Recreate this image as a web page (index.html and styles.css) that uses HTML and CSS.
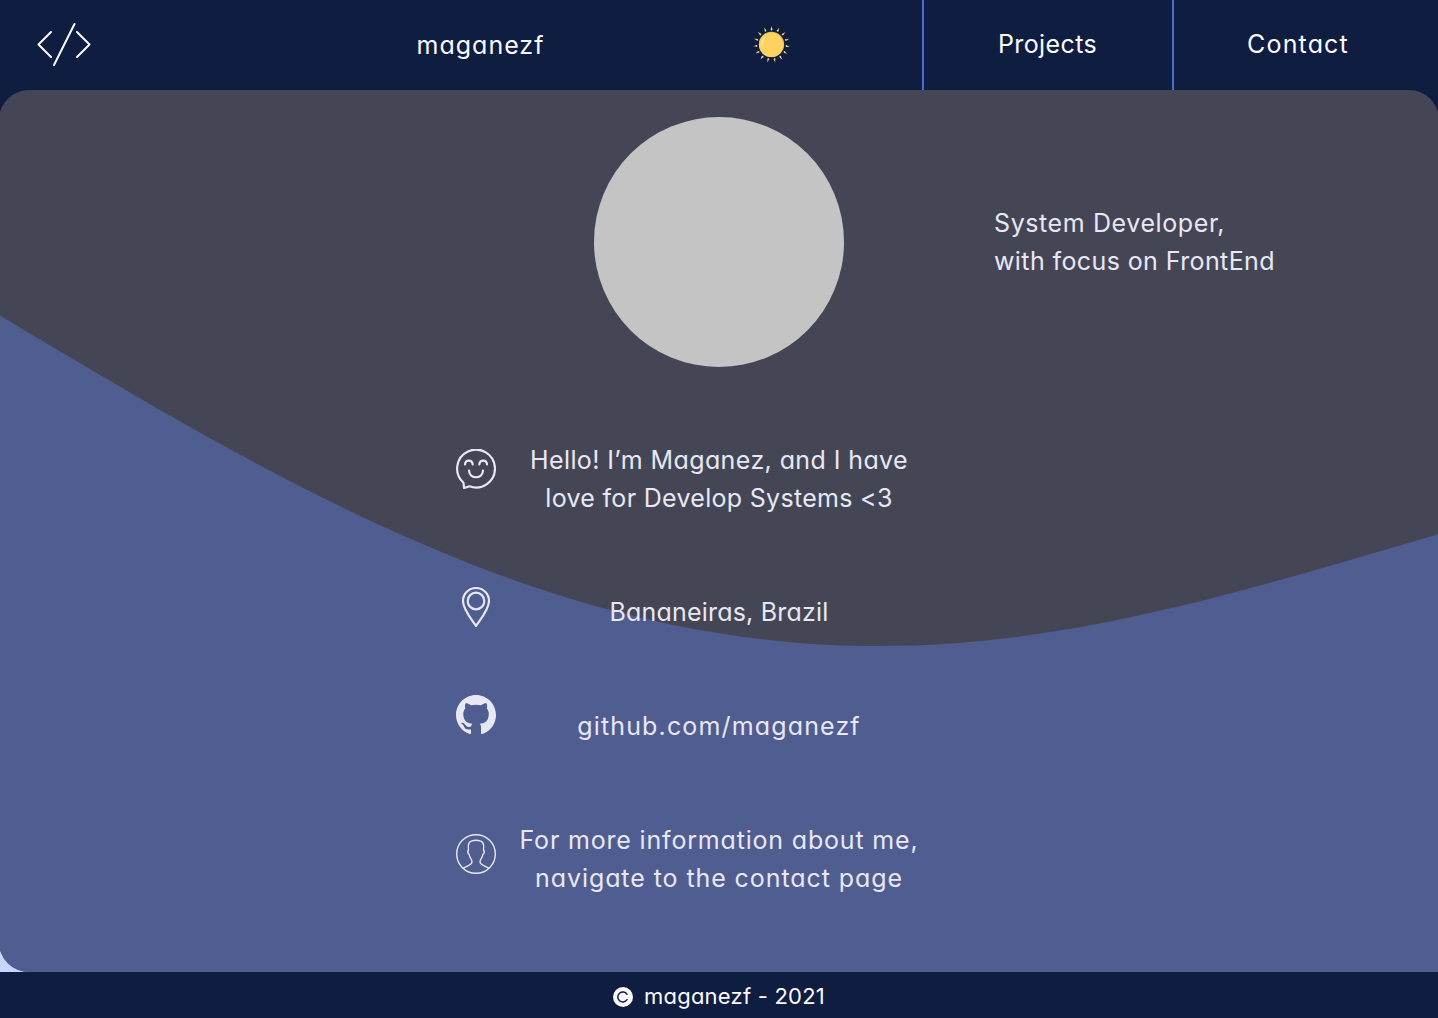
FILE: index.html
```html
<!DOCTYPE html>
<html lang="en">
<head>
<meta charset="utf-8">
<title>maganezf</title>
<link rel="stylesheet" href="styles.css">
</head>
<body>
<header class="header">
  <svg class="logo" viewBox="0 0 54 44"><path d="M14 9 1.500 21.500 14 34M40 9 52.500 21.500 40 34M37.500 1 17 42"/></svg>
  <div class="brand"><span class="t-brand">maganezf</span></div>
  <svg class="sun" viewBox="-18 -18 36 36">
    <defs><path id="ray" d="M-1-14.500Q0-15.500 0-18Q1-15.500 1-14.500L0-13.500Z"/></defs>
    <g class="rays">
      <use href="#ray"/><use href="#ray" transform="rotate(24)"/><use href="#ray" transform="rotate(48)"/><use href="#ray" transform="rotate(72)"/><use href="#ray" transform="rotate(96)"/><use href="#ray" transform="rotate(120)"/><use href="#ray" transform="rotate(144)"/><use href="#ray" transform="rotate(168)"/><use href="#ray" transform="rotate(192)"/><use href="#ray" transform="rotate(216)"/><use href="#ray" transform="rotate(240)"/><use href="#ray" transform="rotate(264)"/><use href="#ray" transform="rotate(288)"/><use href="#ray" transform="rotate(312)"/><use href="#ray" transform="rotate(336)"/>
    </g>
    <circle class="sun-edge" r="12.300"/><circle class="sun-disc" cx="-.3" cy=".3" r="11.800"/>
    <path class="sun-shine" d="M-9.800 1A10 10 0 0 1-7-6"/>
  </svg>
  <nav class="nav"><a class="tab"><span class="t-projects">Projects</span></a><a class="tab"><span class="t-contact">Contact</span></a></nav>
</header>
<main class="main">
  <div class="panel">
  <svg class="wave" viewBox="0 0 1440 882"><path d="M0 225C300 405 560 556 881 556C1062 556 1230 506 1440 444V882H30A30 30 0 0 1 0 852Z"/></svg>
  <section class="profile">
    <div class="avatar"></div>
    <p class="role"><span class="t-role1">System Developer,</span><br><span class="t-role2">with focus on FrontEnd</span></p>
  </section>
  <ul class="facts">
    <li class="fact hello">
      <svg class="icon" viewBox="0 0 40 40"><path class="line" d="M7.500 33.700A18.900 18.900 0 1 1 13.500 37.300L8 39Z"/><path class="line" d="M9 15.500C9.300 10.300 16.300 10.300 16.700 15.500M23.300 15.500C23.700 10.300 30.700 10.300 31 15.500M13 21.500C13.500 30.500 26.500 30.500 27 21.500"/></svg>
      <p><span class="t-hello1">Hello! I’m Maganez, and I have</span><br><span class="t-hello2">love for Develop Systems &lt;3</span></p>
    </li>
    <li class="fact place">
      <svg class="icon" viewBox="0 0 40 40"><path class="line" d="M20 39C16 33 7 22.500 7 14A13 13 0 0 1 33 14C33 22.500 24 33 20 39Z"/><circle class="line" cx="20" cy="14" r="8.300"/></svg>
      <p><span class="t-place">Bananeiras, Brazil</span></p>
    </li>
    <li class="fact github">
      <svg class="icon" viewBox="0 0 16 16"><path class="solid" d="M8 0C3.580 0 0 3.580 0 8c0 3.540 2.290 6.530 5.470 7.590.4.070.55-.17.55-.38 0-.19-.01-.82-.01-1.490-2.010.37-2.530-.49-2.690-.94-.09-.23-.48-.94-.82-1.130-.28-.15-.68-.52-.01-.53.63-.01 1.080.58 1.230.82.72 1.210 1.870.87 2.330.66.07-.52.28-.87.51-1.070-1.780-.2-3.640-.89-3.640-3.950 0-.87.31-1.590.82-2.150-.08-.2-.36-1.020.08-2.120 0 0 .67-.21 2.200.82.64-.18 1.320-.27 2-.27s1.360.09 2 .27c1.530-1.040 2.200-.82 2.200-.82.44 1.100.16 1.920.08 2.120.51.56.82 1.270.82 2.150 0 3.070-1.870 3.750-3.650 3.950.29.25.54.73.54 1.480 0 1.070-.01 1.930-.01 2.200 0 .21.15.46.55.38A8 8 0 0 0 16 8c0-4.420-3.580-8-8-8Z"/></svg>
      <p><span class="t-github">github.com/maganezf</span></p>
    </li>
    <li class="fact more">
      <svg class="icon" viewBox="0 0 40 40"><g class="thin"><circle cx="20" cy="20" r="19.300"/><path d="M7 34.300C12 31.300 16.300 31 16 27.500C15.800 24.700 13.800 24.500 13.200 20.500C11.700 19.500 11.500 17.500 12.500 16C11.500 9 13.500 6.300 20 6.300S28.500 9 27.500 16C28.500 17.500 28.300 19.500 26.800 20.500C26.200 24.500 24.200 24.700 24 27.500C23.700 31 28 31.300 33 34.300"/></g></svg>
      <p><span class="t-more1">For more information about me,</span><br><span class="t-more2">navigate to the contact page</span></p>
    </li>
  </ul>
  </div>
</main>
<footer class="footer">
  <svg class="copy" viewBox="0 0 20 20"><circle cx="10" cy="10" r="10"/><path d="M14 7.300A5 5 0 1 0 14 12.700"/></svg>
  <span class="t-footer">maganezf - 2021</span>
</footer>
</body>
</html>
```
FILE: styles.css
```css
*{box-sizing:border-box}
body{margin:0;width:1438px;height:1018px;overflow:hidden;background:#0f1d41;color:#e8e8f4;font:400 25px/38px Inter,"Open Sans",sans-serif;font-feature-settings:"cv11";display:flex;flex-direction:column}
p,ul{margin:0;padding:0;list-style:none}
span{white-space:nowrap}
.header{height:90px;display:grid;grid-template-columns:340px 280px 302px 516px;align-items:center;color:#fafaff}
.logo{width:54px;height:44px;margin:0 0 0 37px;fill:none;stroke:#fafaff;stroke-width:2;stroke-linecap:round;stroke-linejoin:round}
.brand{text-align:center;padding-left:1px}
.sun{width:37px;height:37px;justify-self:center;margin:-1px 0 0 1px}
.rays{fill:#f4d48c}
.sun-edge{fill:#f7b84e}
.sun-disc{fill:#ffd264}
.sun-shine{fill:none;stroke:#fff0b0;stroke-width:1.2;stroke-linecap:round}
.nav{height:90px;display:grid;grid-template-columns:250px 266px}
.tab{border-left:2px solid #4a6bd0;display:flex;align-items:center;justify-content:center;padding:0 1px 2px 0}
.tab:last-child{padding-right:16px}
.main{height:882px;background:linear-gradient(#0f1d41 50%,#c8d6ff 50%)}
.panel{width:1440px;height:882px;margin-left:-1px;background:#454655;border-radius:30px 30px 0 30px;display:grid;grid-template-rows:277px 1fr;overflow:hidden}
.wave,.profile,.facts{grid-column:1}
.wave{grid-row:1/3;width:1440px;height:882px;fill:#505d91}
.profile{grid-row:1;display:grid;grid-template-columns:250px 300px;column-gap:150px;padding:27px 0 0 595px;align-items:center}
.avatar{width:250px;height:250px;border-radius:50%;background:#c4c4c4}
.facts{grid-row:2;padding:74px 0 0 457px}
.fact{display:grid;grid-template-columns:40px 400px;column-gap:23px;text-align:center}
.icon{width:40px;height:40px;display:block}
.hello{height:152px}.hello .icon{margin-top:8px}
.place{height:114px}.place .icon{margin-top:-6px}
.github{height:114px}.github .icon{margin-top:-12px}
.more .icon{margin-top:13px}
.line{fill:none;stroke:#e8e8f4;stroke-width:2.2;stroke-linecap:round;stroke-linejoin:round}
.thin{fill:none;stroke:#e8e8f4;stroke-width:1.4}
.solid{fill:#e8e8f4}
.footer{height:46px;display:flex;align-items:center;padding:3px 0 0 613px;gap:11px;font-size:22px;color:#fafaff}
.footer span{margin-top:-2px}
.copy{width:20px;height:20px;fill:#fafaff}
.copy path{fill:none;stroke:#0f1d41;stroke-width:1.5;stroke-linecap:round}
.t-brand{letter-spacing:1px}
.t-projects{letter-spacing:.4px}
.t-contact{letter-spacing:1.15px}
.t-role1{letter-spacing:.6px}
.t-role2{letter-spacing:.4px}
.t-hello1{letter-spacing:.4px}
.t-hello2{letter-spacing:.3px}
.t-place{letter-spacing:.2px}
.t-github{letter-spacing:1.15px}
.t-more1{letter-spacing:.82px}
.t-more2{letter-spacing:.92px}
.t-footer{letter-spacing:.22px}
```
